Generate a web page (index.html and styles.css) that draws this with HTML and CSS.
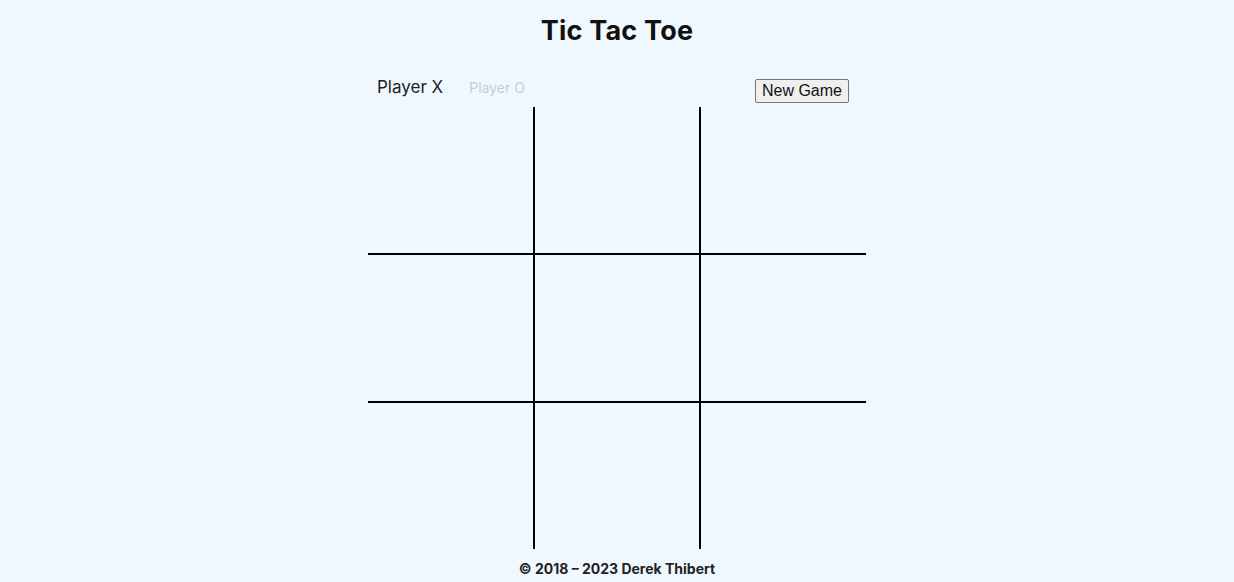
FILE: index.html
```html
<!DOCTYPE html>
<html lang="en">
<head>
<meta charset="utf-8">
<title>Tic Tac Toe</title>
<link rel="stylesheet" href="styles.css">
</head>
<body>
<main class="app">
  <h1 class="title">Tic Tac Toe</h1>
  <div class="game">
    <div class="toolbar">
      <div class="players">
        <span class="player active">Player X</span>
        <span class="player inactive">Player O</span>
      </div>
      <button class="new-game" type="button">New Game</button>
    </div>
    <div class="board">
      <div class="cell c-r c-b"></div>
      <div class="cell c-r c-b"></div>
      <div class="cell c-b"></div>
      <div class="cell c-r c-b"></div>
      <div class="cell c-r c-b"></div>
      <div class="cell c-b"></div>
      <div class="cell c-r"></div>
      <div class="cell c-r"></div>
      <div class="cell"></div>
    </div>
  </div>
  <footer class="footer">© 2018 – 2023 Derek Thibert</footer>
</main>
</body>
</html>
```
FILE: styles.css
```css
html, body {
  margin: 0;
  padding: 0;
  background: #f0f8ff;
}
body {
  font-family: Inter, "DejaVu Sans", sans-serif;
  color: #111;
}
.app {
  display: flex;
  flex-direction: column;
  align-items: center;
}
.title {
  margin: 14px 0 0;
  font-size: 27px;
  line-height: 34px;
  font-weight: 700;
  letter-spacing: 0.2px;
}
.game {
  width: 498px;
  margin-top: 28px;
}
.toolbar {
  display: flex;
  align-items: flex-start;
  justify-content: space-between;
  height: 31px;
  padding: 0 17px 0 9px;
}
.players {
  display: flex;
  align-items: baseline;
  gap: 26px;
  line-height: 23px;
}
.player.active {
  font-size: 17px;
  color: #222;
}
.player.inactive {
  font-size: 14px;
  color: #c8ccd0;
}
.new-game {
  font-family: "Liberation Sans", Arial, sans-serif;
  font-size: 16px;
  padding: 1px 6px;
  height: 24px;
  margin-top: 3px;
  border: 1px solid #767676;
  border-radius: 2px;
  background: #efefef;
  color: #111;
}
.board {
  display: grid;
  grid-template-columns: 167px 166px 165px;
  grid-template-rows: 148px 148px 146px;
}
.cell.c-r {
  border-right: 2px solid #000;
}
.cell.c-b {
  border-bottom: 2px solid #000;
}
.footer {
  margin-top: 11px;
  font-size: 14px;
  font-weight: 700;
  letter-spacing: 0;
  color: #222;
}
```
